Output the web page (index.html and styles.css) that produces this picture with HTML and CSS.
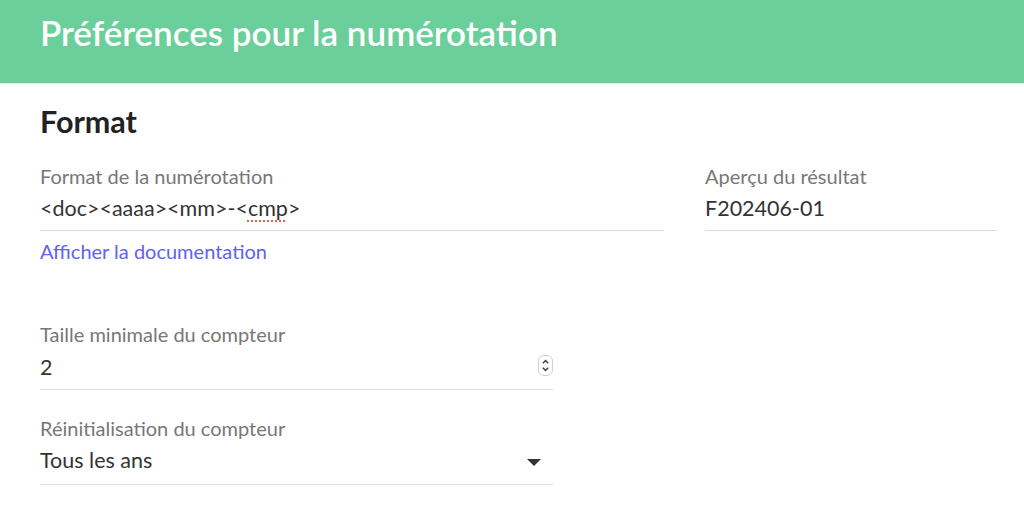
FILE: index.html
```html
<!DOCTYPE html>
<html lang="fr">
<head>
<meta charset="utf-8">
<title>Préférences pour la numérotation</title>
<link rel="stylesheet" href="styles.css">
</head>
<body>
<header class="topbar">
  <h1 class="topbar-title">Préférences pour la numérotation</h1>
</header>
<main class="content">
  <h2 class="section-title">Format</h2>
  <div class="format-grid">
    <div class="field-block">
      <div class="field">
        <div class="field-label">Format de la numérotation</div>
        <div class="field-value">&lt;doc&gt;&lt;aaaa&gt;&lt;mm&gt;-&lt;<span class="spell">cmp</span>&gt;</div>
      </div>
      <a class="doc-link" href="#">Afficher la documentation</a>
    </div>
    <div class="field">
      <div class="field-label">Aperçu du résultat</div>
      <div class="field-value">F202406-01</div>
    </div>
  </div>
  <div class="narrow-fields">
    <div class="field field--number">
      <div class="field-label">Taille minimale du compteur</div>
      <div class="field-value field-row">
        <span>2</span>
        <svg class="spinner" width="15" height="21" viewBox="0 0 15 21">
          <rect x="0.5" y="0.5" width="14" height="20" rx="5.5" fill="#fff" stroke="#d0d0d0"/>
          <path d="M4.8 8.2 L7.5 5.6 L10.2 8.2" fill="none" stroke="#444" stroke-width="1.5"/>
          <path d="M4.8 12.8 L7.5 15.4 L10.2 12.8" fill="none" stroke="#444" stroke-width="1.5"/>
        </svg>
      </div>
    </div>
    <div class="field field--select">
      <div class="field-label">Réinitialisation du compteur</div>
      <div class="field-value field-row">
        <span>Tous les ans</span>
        <svg class="caret" width="14" height="7" viewBox="0 0 14 7">
          <path d="M0 0 H14 L7 7 Z" fill="#333"/>
        </svg>
      </div>
    </div>
  </div>
</main>
</body>
</html>
```

FILE: styles.css
```css
* { box-sizing: border-box; }
html, body {
  margin: 0;
  padding: 0;
  background: #fff;
  font-family: Lato, "Open Sans", sans-serif;
  color: #333;
}
.topbar {
  background: #6bcf9b;
  height: 84px;
  padding: 11.5px 40px 0;
  border-bottom: 1px solid #d6f2e4;
}
.topbar-title {
  margin: 0;
  color: #fff;
  font-size: 35px;
  font-weight: 600;
  line-height: 40px;
}
.content {
  padding: 19.4px 27px 0 40px;
}
.section-title {
  margin: 0;
  font-size: 30.5px;
  font-weight: 700;
  color: #222;
  line-height: 36px;
}
.format-grid {
  display: grid;
  grid-template-columns: 624px 292px;
  column-gap: 41px;
  align-items: start;
  margin-top: 25px;
}
.field {
  border-bottom: 1px solid #dddddd;
  padding-bottom: 7.5px;
}
.field-label {
  font-size: 20px;
  color: #777;
  line-height: 24px;
}
.field-value {
  font-size: 21.5px;
  color: #333;
  line-height: 30px;
  margin-top: 4.5px;
}
.field--number { padding-bottom: 7px; }
.field--number .field-value { margin-top: 5.5px; }
.field--select { padding-bottom: 8.5px; }
.field--select .field-value { margin-top: 5.5px; }
.spell {
  text-decoration: underline dotted #e06060;
  text-underline-offset: 5px;
}
.doc-link {
  display: block;
  margin-top: 8px;
  font-size: 20px;
  color: #6161f2;
  text-decoration: none;
  line-height: 24px;
}
.narrow-fields {
  width: 513px;
  margin-top: 59px;
  display: flex;
  flex-direction: column;
  gap: 26px;
}
.field-row {
  display: flex;
  align-items: center;
  justify-content: space-between;
}
.spinner { margin-right: 0; margin-top: -2px; }
.caret { margin-right: 12px; margin-top: 4px; }
```
